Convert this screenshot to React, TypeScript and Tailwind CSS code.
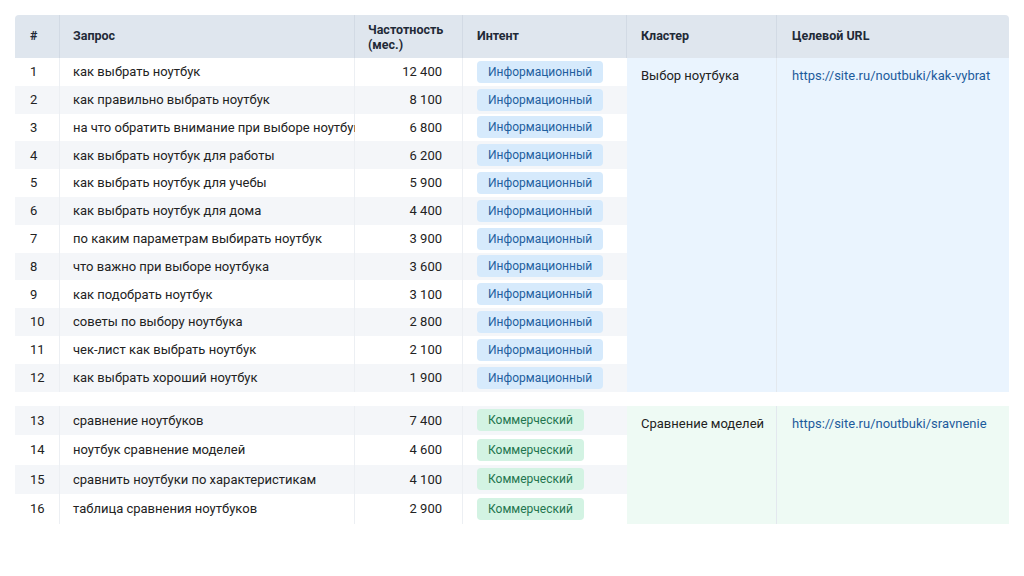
import React from 'react';

const info = [
  ['1', 'как выбрать ноутбук', '12 400'],
  ['2', 'как правильно выбрать ноутбук', '8 100'],
  ['3', 'на что обратить внимание при выборе ноутбука', '6 800'],
  ['4', 'как выбрать ноутбук для работы', '6 200'],
  ['5', 'как выбрать ноутбук для учебы', '5 900'],
  ['6', 'как выбрать ноутбук для дома', '4 400'],
  ['7', 'по каким параметрам выбирать ноутбук', '3 900'],
  ['8', 'что важно при выборе ноутбука', '3 600'],
  ['9', 'как подобрать ноутбук', '3 100'],
  ['10', 'советы по выбору ноутбука', '2 800'],
  ['11', 'чек-лист как выбрать ноутбук', '2 100'],
  ['12', 'как выбрать хороший ноутбук', '1 900'],
];

const compare = [
  ['13', 'сравнение ноутбуков', '7 400'],
  ['14', 'ноутбук сравнение моделей', '4 600'],
  ['15', 'сравнить ноутбуки по характеристикам', '4 100'],
  ['16', 'таблица сравнения ноутбуков', '2 900'],
];

const cols = 'grid w-[994px] grid-cols-[45px_295px_108px_164px_150px_232px]';

const Group = ({
  rows,
  rowH,
  badge,
  badgeCls,
  cluster,
  url,
  sideBg,
  firstGrey,
}: {
  rows: string[][];
  rowH: string;
  badge: string;
  badgeCls: string;
  cluster: string;
  url: string;
  sideBg: string;
  firstGrey: boolean;
}) => (
  <div className={`${cols} ${rowH}`}>
    {rows.map((r, i) => {
      const grey = (i % 2 === 0) === firstGrey;
      const bg = grey ? 'bg-[#f4f6f9]' : 'bg-white';
      return (
        <React.Fragment key={r[0]}>
          <div className={`${bg} pl-[15px] flex items-center border-r border-[#eceff3]`} style={{ gridColumn: 1, gridRow: i + 1 }}>{r[0]}</div>
          <div className={`${bg} pl-[13px] flex items-center whitespace-nowrap border-r border-[#eceff3]`} style={{ gridColumn: 2, gridRow: i + 1 }}>{r[1]}</div>
          <div className={`${bg} pr-[20px] flex items-center justify-end border-r border-[#eceff3]`} style={{ gridColumn: 3, gridRow: i + 1 }}>{r[2]}</div>
          <div className={`${bg} pl-[14px] flex items-center`} style={{ gridColumn: 4, gridRow: i + 1 }}>
            <span className={`${badgeCls} rounded px-[11px] py-[2px] text-[12px]`}>{badge}</span>
          </div>
        </React.Fragment>
      );
    })}
    <div className={`${sideBg} px-[14px] pt-[8px] whitespace-nowrap border-r border-[#e3e8ee]`} style={{ gridColumn: 5, gridRow: `1 / span ${rows.length}` }}>{cluster}</div>
    <div className={`${sideBg} px-[15px] pt-[8px] whitespace-nowrap text-[#1d5b9c]`} style={{ gridColumn: 6, gridRow: `1 / span ${rows.length}` }}>{url}</div>
  </div>
);

export default function App() {
  return (
    <div className="w-[1024px] h-[576px] bg-white pt-[15px] pl-[15px] text-[13px] text-[#222] font-[Roboto]">
      <div className={`${cols} h-[43px] bg-[#dfe6ee] font-bold text-[12.5px] text-[#1f2a37] rounded-t-sm`}>
        <div className="pl-[15px] flex items-center border-r border-[#d2dae4]">#</div>
        <div className="pl-[13px] flex items-center border-r border-[#d2dae4]">Запрос</div>
        <div className="pl-[13px] flex items-center leading-[15px] border-r border-[#d2dae4]">Частотность<br />(мес.)</div>
        <div className="pl-[14px] flex items-center border-r border-[#d2dae4]">Интент</div>
        <div className="pl-[14px] flex items-center border-r border-[#d2dae4]">Кластер</div>
        <div className="pl-[15px] flex items-center">Целевой URL</div>
      </div>
      <Group
        rows={info}
        rowH="grid-rows-[repeat(12,27.8px)]"
        badge="Информационный"
        badgeCls="bg-[#d6eafc] text-[#1f5f9e]"
        cluster="Выбор ноутбука"
        url="https://site.ru/noutbuki/kak-vybrat"
        sideBg="bg-[#eaf4fe]"
        firstGrey={false}
      />
      <div className="h-[14px]" />
      <Group
        rows={compare}
        rowH="grid-rows-[repeat(4,29.5px)]"
        badge="Коммерческий"
        badgeCls="bg-[#d3f3e3] text-[#23754f]"
        cluster="Сравнение моделей"
        url="https://site.ru/noutbuki/sravnenie"
        sideBg="bg-[#eefaf4]"
        firstGrey={true}
      />
    </div>
  );
}
